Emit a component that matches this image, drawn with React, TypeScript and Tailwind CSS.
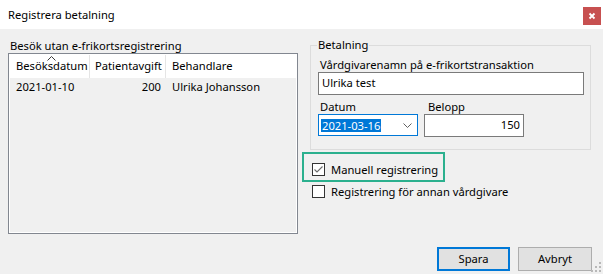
import React from "react";

function CheckBox({ checked }: { checked?: boolean }) {
  return (
    <div className="w-[13px] h-[13px] border border-[#333333] bg-white flex items-center justify-center shrink-0">
      {checked && (
        <svg width="11" height="11" viewBox="0 0 11 11">
          <path d="M1.5 5.5 L4 8 L9.5 2.5" stroke="#6b6b6b" strokeWidth="1.1" fill="none" />
        </svg>
      )}
    </div>
  );
}

export default function App() {
  return (
    <div className="relative w-[603px] h-[274px] bg-[#f0f0f0] flex flex-col font-['Noto_Sans',sans-serif] text-[11.2px] text-black overflow-hidden">
      {/* titelrad */}
      <div className="h-[29px] bg-white flex justify-between pl-[8px] pr-[2px]">
        <div className="self-center leading-[14px] mt-[1px]">Registrera betalning</div>
        <div className="mt-[7px] w-[18px] h-[18px] bg-[#c75050] flex items-center justify-center">
          <svg width="8" height="8" viewBox="0 0 8 8">
            <path d="M1.5 1.5 L6.5 6.5 M6.5 1.5 L1.5 6.5" stroke="#ffffff" strokeWidth="1.8" />
          </svg>
        </div>
      </div>

      <div className="flex-1 flex flex-col px-[8px] pt-[9px]">
        <div className="flex">
          {/* vänster: besök */}
          <div className="w-[290px] flex flex-col">
            <div className="h-[15px] leading-[15px] pl-[2px]">Besök utan e-frikortsregistrering</div>
            <div className="h-[181px] border border-[#828790]">
              <div className="h-full border border-white flex flex-col">
                <div className="relative h-[23px] bg-white flex items-center">
                  <div className="w-[80px] h-full flex items-center pl-[6px] border-r border-[#e5e5e5]">Besöksdatum</div>
                  <div className="w-[76px] h-full flex items-center pl-[5px] border-r border-[#e5e5e5]">Patientavgift</div>
                  <div className="flex-1 h-full flex items-center pl-[6px]">Behandlare</div>
                  <svg className="absolute left-[37px] top-[1px]" width="9" height="5" viewBox="0 0 9 5">
                    <path d="M0.5 4.5 L4.5 0.5 L8.5 4.5" stroke="#3c3c3c" strokeWidth="1" fill="none" />
                  </svg>
                </div>
                <div className="h-[19px] flex items-center">
                  <div className="w-[80px] pl-[6px]">2021-01-10</div>
                  <div className="w-[76px] text-right pr-[5px]">200</div>
                  <div className="flex-1 pl-[6px]">Ulrika Johansson</div>
                </div>
              </div>
            </div>
          </div>

          {/* höger: betalning */}
          <div className="ml-[4px] flex flex-col">
            <fieldset className="ml-[8px] w-[281px] border border-[#dcdcdc] pb-[12px]">
              <legend className="ml-[6px] px-[1px] leading-[14px]">Betalning</legend>
              <div className="mt-[6px] ml-[9px] leading-[14px]">Vårdgivarenamn på e-frikortstransaktion</div>
              <div className="ml-[7px] w-[266px] h-[23px] border border-[#7a7a7a] bg-white flex items-center pl-[3px]">Ulrika test</div>
              <div className="mt-[5px] ml-[7px] flex gap-[6px]">
                <div className="w-[100px] flex flex-col">
                  <div className="pl-[2px] leading-[14px]">Datum</div>
                  <div className="h-[22px] border border-[#0078d7] bg-white flex items-center justify-between pl-[2px] pr-[5px]">
                    <span className="bg-[#0078d7] text-white leading-[13px] px-[1px]">2021-03-16</span>
                    <svg width="9" height="5" viewBox="0 0 9 5">
                      <path d="M0.5 0.5 L4.5 4.5 L8.5 0.5" stroke="#606060" strokeWidth="1" fill="none" />
                    </svg>
                  </div>
                </div>
                <div className="w-[100px] flex flex-col">
                  <div className="pl-[4px] leading-[14px]">Belopp</div>
                  <div className="h-[23px] border border-[#7a7a7a] bg-white flex items-center justify-end pr-[3px]">150</div>
                </div>
              </div>
            </fieldset>

            <div className="mt-[2px] w-[143px] h-[30px] border-2 border-[#2bb08e] flex items-start pt-[9px] pl-[8px]">
              <CheckBox checked />
              <span className="ml-[6px] leading-[13px]">Manuell registrering</span>
            </div>
            <div className="mt-[3px] ml-[10px] flex items-center">
              <CheckBox />
              <span className="ml-[6px] leading-[13px]">Registrering för annan vårdgivare</span>
            </div>
          </div>
        </div>

        {/* knappar */}
        <div className="mt-[13px] mr-[3px] flex justify-end gap-[8px]">
          <button className="w-[73px] h-[24px] bg-[#e1e1e1] border-2 border-[#0078d7] flex items-center justify-center">Spara</button>
          <button className="w-[74px] h-[24px] bg-[#e1e1e1] border border-[#adadad] flex items-center justify-center">Avbryt</button>
        </div>
      </div>

      <svg className="absolute right-[2px] bottom-[2px]" width="10" height="10" viewBox="0 0 10 10">
        <rect x="8" y="0" width="2" height="2" fill="#b8b8b8" />
        <rect x="4" y="4" width="2" height="2" fill="#b8b8b8" />
        <rect x="8" y="4" width="2" height="2" fill="#b8b8b8" />
        <rect x="0" y="8" width="2" height="2" fill="#b8b8b8" />
        <rect x="4" y="8" width="2" height="2" fill="#b8b8b8" />
        <rect x="8" y="8" width="2" height="2" fill="#b8b8b8" />
      </svg>
    </div>
  );
}
